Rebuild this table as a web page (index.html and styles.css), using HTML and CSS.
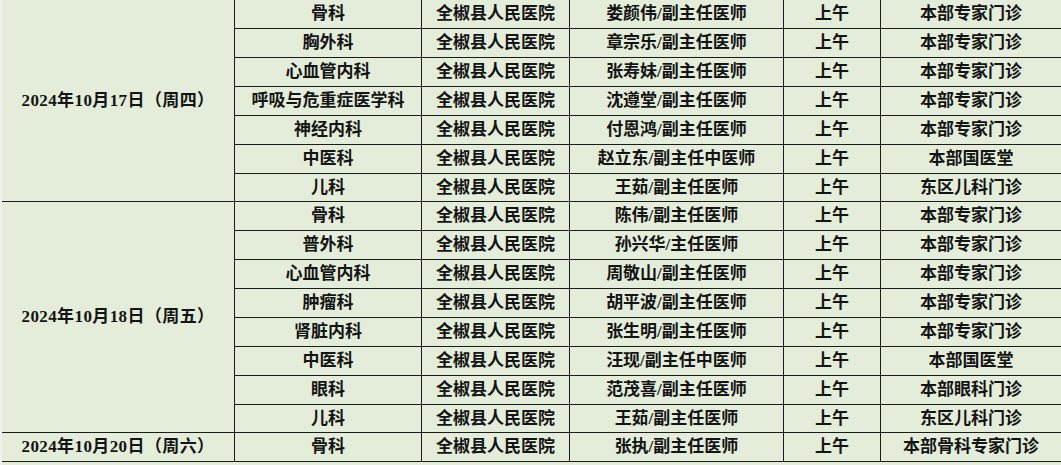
FILE: index.html
```html
<!DOCTYPE html>
<html lang="zh-CN">
<head>
<meta charset="utf-8">
<title>专家门诊排班</title>
<link rel="stylesheet" href="styles.css">
</head>
<body>
<div class="sheet">
  <div class="c date span7">2024年10月17日（周四）</div>
  <div class="c">骨科</div><div class="c">全椒县人民医院</div><div class="c">娄颜伟/副主任医师</div><div class="c">上午</div><div class="c end">本部专家门诊</div>
  <div class="c">胸外科</div><div class="c">全椒县人民医院</div><div class="c">章宗乐/副主任医师</div><div class="c">上午</div><div class="c end">本部专家门诊</div>
  <div class="c">心血管内科</div><div class="c">全椒县人民医院</div><div class="c">张寿妹/副主任医师</div><div class="c">上午</div><div class="c end">本部专家门诊</div>
  <div class="c">呼吸与危重症医学科</div><div class="c">全椒县人民医院</div><div class="c">沈遵堂/副主任医师</div><div class="c">上午</div><div class="c end">本部专家门诊</div>
  <div class="c">神经内科</div><div class="c">全椒县人民医院</div><div class="c">付恩鸿/副主任医师</div><div class="c">上午</div><div class="c end">本部专家门诊</div>
  <div class="c">中医科</div><div class="c">全椒县人民医院</div><div class="c">赵立东/副主任中医师</div><div class="c">上午</div><div class="c end">本部国医堂</div>
  <div class="c">儿科</div><div class="c">全椒县人民医院</div><div class="c">王茹/副主任医师</div><div class="c">上午</div><div class="c end">东区儿科门诊</div>

  <div class="c date span8">2024年10月18日（周五）</div>
  <div class="c">骨科</div><div class="c">全椒县人民医院</div><div class="c">陈伟/副主任医师</div><div class="c">上午</div><div class="c end">本部专家门诊</div>
  <div class="c">普外科</div><div class="c">全椒县人民医院</div><div class="c">孙兴华/主任医师</div><div class="c">上午</div><div class="c end">本部专家门诊</div>
  <div class="c">心血管内科</div><div class="c">全椒县人民医院</div><div class="c">周敬山/副主任医师</div><div class="c">上午</div><div class="c end">本部专家门诊</div>
  <div class="c">肿瘤科</div><div class="c">全椒县人民医院</div><div class="c">胡平波/副主任医师</div><div class="c">上午</div><div class="c end">本部专家门诊</div>
  <div class="c">肾脏内科</div><div class="c">全椒县人民医院</div><div class="c">张生明/副主任医师</div><div class="c">上午</div><div class="c end">本部专家门诊</div>
  <div class="c">中医科</div><div class="c">全椒县人民医院</div><div class="c">汪现/副主任中医师</div><div class="c">上午</div><div class="c end">本部国医堂</div>
  <div class="c">眼科</div><div class="c">全椒县人民医院</div><div class="c">范茂喜/副主任医师</div><div class="c">上午</div><div class="c end">本部眼科门诊</div>
  <div class="c">儿科</div><div class="c">全椒县人民医院</div><div class="c">王茹/副主任医师</div><div class="c">上午</div><div class="c end">东区儿科门诊</div>

  <div class="c date">2024年10月20日（周六）</div>
  <div class="c">骨科</div><div class="c">全椒县人民医院</div><div class="c">张执/副主任医师</div><div class="c">上午</div><div class="c end">本部骨科专家门诊</div>
</div>
</body>
</html>
```

FILE: styles.css
```css
html, body {
  margin: 0;
  padding: 0;
  background: #e3edda;
}

body {
  width: 1061px;
  height: 465px;
  overflow: hidden;
  box-sizing: border-box;
  border-left: 2px solid #eef2ea;
}

.sheet {
  display: grid;
  grid-template-columns: 233px 187px 148px 214px 97px 180px;
  grid-template-rows: 29px 29px 29px 29px 29px 29px 28px 29px 29px 29px 29px 29px 29px 29px 28px 29px;
  font-family: "Liberation Serif", "Noto Sans CJK SC", serif;
  font-weight: 700;
  font-size: 17px;
  color: #141414;
}

.c {
  box-sizing: border-box;
  border-right: 1px solid #1c1c1c;
  border-bottom: 1px solid #1c1c1c;
  display: flex;
  align-items: center;
  justify-content: center;
  white-space: nowrap;
  line-height: 1;
  padding-bottom: 1px;
}

.end {
  border-right: none;
}

.date {
  grid-column: 1;
  letter-spacing: 0.4px;
}

.span7 {
  grid-row: span 7;
}

.span8 {
  grid-row: span 8;
}
```
